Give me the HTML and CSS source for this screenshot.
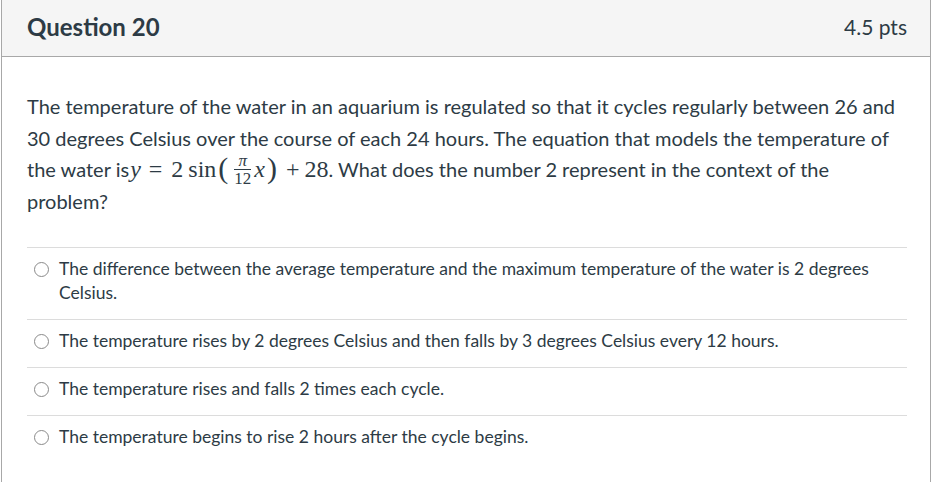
FILE: index.html
```html
<!DOCTYPE html>
<html>
<head>
<meta charset="utf-8">
<link rel="stylesheet" href="styles.css">
</head>
<body>
<div class="question">
  <div class="q-header">
    <span class="q-title">Question 20</span>
    <span class="q-pts">4.5 pts</span>
  </div>
  <div class="q-body">
    <p class="q-text">The temperature of the water in an aquarium is regulated so that it cycles regularly between 26 and 30 degrees Celsius over the course of each 24 hours. The equation that models the temperature of the water is<span class="math"><i class="var-y">y</i><span class="op">=</span>2<span class="fn">sin</span><span class="paren">(</span><span class="frac"><span class="num"><i>π</i></span><span class="den">12</span></span><i class="var-x">x</i><span class="paren">)</span><span class="op plus">+</span>28</span>. What does the number 2 represent in the context of the problem?</p>
    <div class="answers">
      <div class="answer"><span class="radio"></span><span class="a-text">The difference between the average temperature and the maximum temperature of the water is 2 degrees Celsius.</span></div>
      <div class="answer"><span class="radio"></span><span class="a-text">The temperature rises by 2 degrees Celsius and then falls by 3 degrees Celsius every 12 hours.</span></div>
      <div class="answer"><span class="radio"></span><span class="a-text">The temperature rises and falls 2 times each cycle.</span></div>
      <div class="answer"><span class="radio"></span><span class="a-text">The temperature begins to rise 2 hours after the cycle begins.</span></div>
    </div>
  </div>
</div>
</body>
</html>
```
FILE: styles.css
```css
html, body {
  margin: 0;
  padding: 0;
  background: #fff;
}
body {
  font-family: Lato, "Liberation Sans", sans-serif;
  color: #2d3b45;
}
.question {
  margin-left: 1px;
  width: 928px;
  border-left: 1px solid #a8a8a8;
  border-right: 1px solid #a8a8a8;
  min-height: 482px;
}
.q-header {
  height: 57px;
  background: #f5f5f5;
  border-bottom: 1px solid #a8a8a8;
  display: flex;
  align-items: center;
  justify-content: space-between;
  padding: 0 23px 3px 25px;
  box-sizing: border-box;
}
.q-title {
  font-size: 24px;
  font-weight: 700;
}
.q-pts {
  font-size: 21px;
}
.q-body {
  padding: 34px 23px 0 25px;
}
.q-text {
  margin: 0;
  font-size: 20px;
  line-height: 31.7px;
}
.math {
  font-family: "Liberation Serif", serif;
  font-size: 24px;
  line-height: 20px;
  white-space: nowrap;
}
.math i {
  font-style: italic;
}
.var-y {
  margin-left: 1px;
}
.op {
  margin: 0 9px 0 8px;
}
.op.plus {
  margin: 0 5px 0 7px;
}
.fn {
  margin-left: 5px;
}
.paren {
  font-size: 30px;
  display: inline-block;
  transform: translateY(1px);
  margin: 0 2px 0 2px;
}
.frac {
  display: inline-block;
  vertical-align: -7px;
  text-align: center;
  margin: 0 3px 0 4px;
}
.frac .num {
  display: block;
  font-size: 17px;
  line-height: 13px;
  border-bottom: 1px solid #2d3b45;
  padding: 0 0 2px;
}
.frac .den {
  display: block;
  font-size: 17px;
  line-height: 13px;
  padding-top: 2px;
}
.answers {
  margin-top: 29px;
}
.answer {
  border-top: 1px solid #dcdcdc;
  display: flex;
  align-items: flex-start;
  padding: 9px 0 14px 7px;
  font-size: 17.5px;
  line-height: 24px;
}
.radio {
  flex: none;
  width: 13px;
  height: 13px;
  border: 1px solid #8a8a8a;
  border-radius: 50%;
  margin-top: 5px;
  margin-right: 10px;
}
.a-text {
  flex: 1;
  padding-right: 20px;
}
```
